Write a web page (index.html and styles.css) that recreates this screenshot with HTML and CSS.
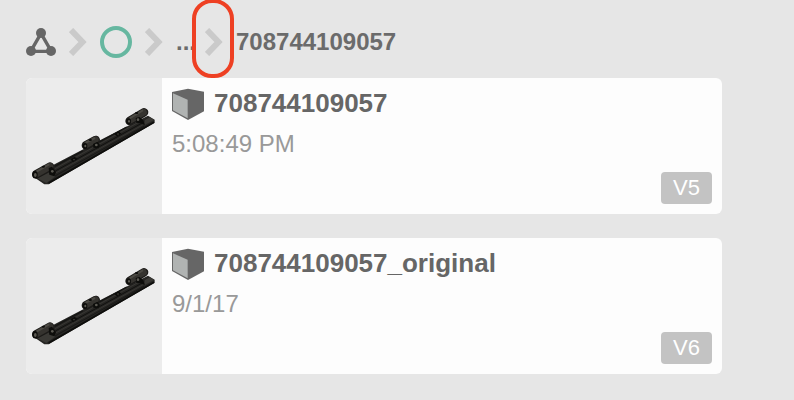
FILE: index.html
```html
<!DOCTYPE html>
<html lang="en">
<head>
    <meta charset="UTF-8">
    <meta name="viewport" content="width=device-width, initial-scale=1.0">
    <title>708744109057</title>
    <link rel="stylesheet" href="styles.css">
</head>
<body>
    <!-- shared drawings -->
    <svg class="symbols" aria-hidden="true">
        <symbol id="chevron" viewBox="0 0 18 28">
            <path d="M2 2 L13.5 14 L2 26" fill="none" stroke="#cacaca" stroke-width="6"/>
        </symbol>
        <symbol id="cube" viewBox="0 0 96 96">
            <path d="M0 12 L48 2 L96 11 V70 L48 96 L0 69 Z" fill="#666"/>
            <path d="M3 16 L47 35 V91 L3 67 Z" fill="#b0b3b2"/>
        </symbol>
        <symbol id="hinge" viewBox="18 24 408 408">
            <path d="M37 314 L98 286 L187 239 L237 212 L319 170 L384 137 L404 149 V158 L86 343 L73 343 L50 327 Z" fill="#262523"/>
            <path d="M52 325 L91 305 L105 320 L79 339 Z" fill="#3a3935"/>
            <path d="M374 151 L390 142 L402 150 L374 165 Z" fill="#3a3935"/>
            <!-- rails -->
            <path d="M104 289 L188 243 M238 216 L320 171" stroke="#151513" stroke-width="4"/>
            <path d="M105 296 L366 151" stroke="#42413c" stroke-width="2"/>
            <path d="M106 303 L370 157" stroke="#11110f" stroke-width="3"/>
            <path d="M107 309 L371 163" stroke="#41403b" stroke-width="2"/>
            <path d="M86 339 L402 157" stroke="#0e0e0c" stroke-width="5"/>
            <path d="M105 318 L372 169" stroke="#181816" stroke-width="3"/>
            <!-- knuckles -->
            <g fill="none" stroke-linecap="round">
                <path d="M49 313 L90 290 M198 226 L227 210 M329 153 L372 127" stroke="#1c1b19" stroke-width="26"/>
                <path d="M53 310 L90 289 M201 223 L226 209 M332 150 L371 127" stroke="#35332f" stroke-width="20"/>
                <path d="M51 304 L86 284 M199 217 L223 205 M331 144 L367 122" stroke="#4c4a44" stroke-width="6"/>
            </g>
            <g fill="#0d0d0b">
                <ellipse cx="45" cy="314" rx="8" ry="11"/>
                <ellipse cx="195" cy="228" rx="7" ry="9"/>
                <ellipse cx="326" cy="154" rx="7" ry="9"/>
                <path d="M86 294 L96 290 L108 306 L103 319 L88 314 Z"/>
                <path d="M219 222 L232 215 L240 225 L235 235 L220 233 Z"/>
                <path d="M347 144 L358 141 L370 151 L374 165 L362 160 L349 158 Z"/>
                <ellipse cx="70" cy="290" rx="5" ry="3"/>
                <ellipse cx="211" cy="210" rx="5" ry="3"/>
                <ellipse cx="350" cy="129" rx="5" ry="3"/>
                <path d="M151 268 L164 260 L173 267 L160 276 Z"/>
                <path d="M283 192 L296 184 L304 191 L291 199 Z"/>
            </g>
            <g fill="#5b5952">
                <ellipse cx="46" cy="315" rx="4" ry="6"/>
                <ellipse cx="196" cy="228" rx="3" ry="4"/>
                <ellipse cx="327" cy="154" rx="3" ry="4"/>
                <circle cx="97" cy="304" r="4"/>
                <circle cx="229" cy="225" r="4"/>
                <circle cx="354" cy="149" r="4"/>
                <circle cx="162" cy="269" r="2"/>
                <circle cx="294" cy="192" r="2"/>
            </g>
        </symbol>
    </svg>

    <nav class="breadcrumb" aria-label="Breadcrumb">
        <a href="#" aria-label="Home">
            <svg class="icon-network" viewBox="0 0 90 84">
                <path d="M45 16 L14 70 H76 Z" fill="none" stroke="#666" stroke-width="10"/>
                <g fill="#666">
                    <circle cx="45" cy="15" r="15"/>
                    <circle cx="15" cy="69" r="15"/>
                    <circle cx="75" cy="69" r="15"/>
                </g>
            </svg>
        </a>
        <svg class="chevron"><use href="#chevron"/></svg>
        <a href="#" class="ring" aria-label="Project"></a>
        <svg class="chevron"><use href="#chevron"/></svg>
        <a href="#" class="more">...</a>
        <span class="marked">
            <svg class="chevron"><use href="#chevron"/></svg>
        </span>
        <a href="#" class="current">708744109057</a>
    </nav>

    <main class="list">
        <article class="card">
            <div class="thumb">
                <svg><use href="#hinge"/></svg>
            </div>
            <div class="card-body">
                <div class="info">
                    <h2 class="title"><svg class="cube"><use href="#cube"/></svg>708744109057</h2>
                    <p class="date">5:08:49 PM</p>
                </div>
                <button type="button" class="version">V5</button>
            </div>
        </article>
        <article class="card">
            <div class="thumb">
                <svg><use href="#hinge"/></svg>
            </div>
            <div class="card-body">
                <div class="info">
                    <h2 class="title"><svg class="cube"><use href="#cube"/></svg>708744109057_original</h2>
                    <p class="date">9/1/17</p>
                </div>
                <button type="button" class="version">V6</button>
            </div>
        </article>
    </main>
</body>
</html>
```
FILE: styles.css
```css
*,
*::after {
    box-sizing: border-box;
}
body {
    margin: 0;
    padding: 0 72px 24px 26px;
    background-color: #e6e6e6;
    font-family: "Liberation Sans", Arial, Helvetica, sans-serif;
    color: #666;
}
.symbols {
    display: none;
}

/* breadcrumb */
.breadcrumb {
    display: flex;
    align-items: center;
    gap: 13px;
    padding: 26px 0 20px;
    font-size: 24px;
    font-weight: bold;
    line-height: 32px;
}
.breadcrumb a {
    color: #6b6b6b;
    text-decoration: none;
}
.icon-network {
    display: block;
    width: 30px;
    height: 28px;
}
.chevron {
    display: block;
    width: 18px;
    height: 28px;
}
.ring {
    width: 32px;
    height: 32px;
    border: 4px solid #66b7a0;
    border-radius: 50%;
}
.more {
    margin-right: -4px;
}
.marked {
    position: relative;
}
.marked::after {
    content: "";
    position: absolute;
    top: -29px;
    left: -13px;
    width: 42px;
    height: 79px;
    border: 4px solid #ee4023;
    border-radius: 20px;
}

/* cards */
.list {
    display: flex;
    flex-direction: column;
    gap: 24px;
}
.card {
    display: flex;
    background-color: #fdfdfd;
    border-radius: 6px;
    overflow: hidden;
}
.thumb {
    flex: none;
    background-color: #ececec;
}
.thumb svg {
    display: block;
    width: 136px;
    height: 136px;
}
.card-body {
    flex: 1;
    display: flex;
    justify-content: space-between;
    padding: 10px;
}
.title {
    display: flex;
    gap: 10px;
    margin: 0 0 10px;
    font-size: 26px;
    line-height: 30px;
}
.cube {
    width: 32px;
    height: 32px;
}
.date {
    margin: 0;
    font-size: 24px;
    line-height: 28px;
    color: #999;
}
.version {
    align-self: flex-end;
    padding: 0 12px;
    border: none;
    border-radius: 4px;
    background-color: #c3c3c3;
    color: #fff;
    font-family: inherit;
    font-size: 22px;
    line-height: 32px;
    cursor: pointer;
}
```
